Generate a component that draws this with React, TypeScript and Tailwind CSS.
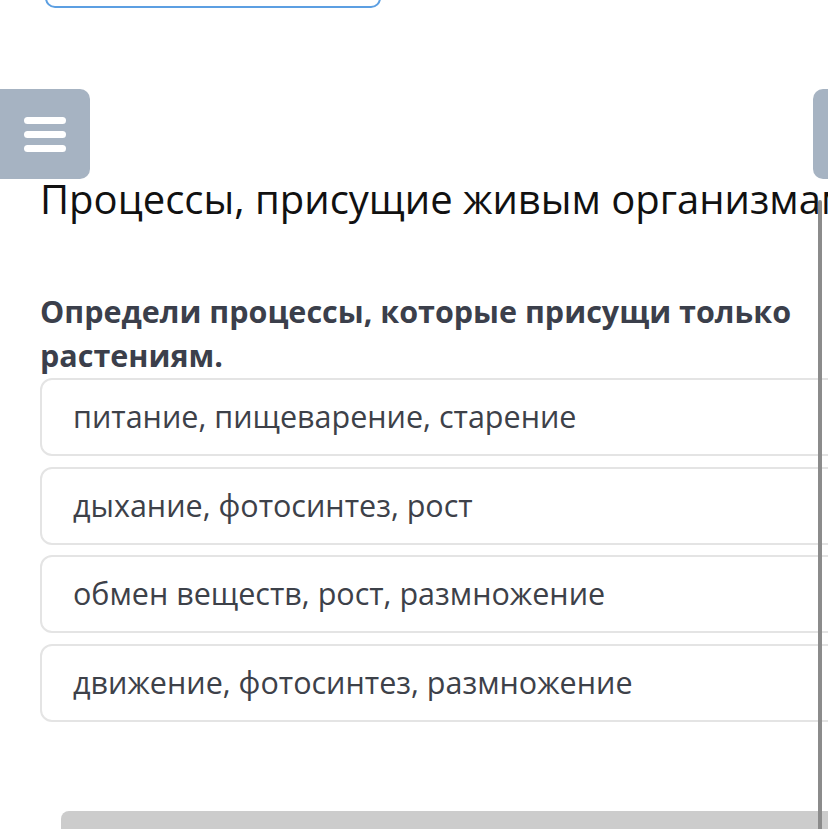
const options = [
  "питание, пищеварение, старение",
  "дыхание, фотосинтез, рост",
  "обмен веществ, рост, размножение",
  "движение, фотосинтез, размножение",
];

function MenuIcon() {
  return (
    <div className="flex flex-col gap-[7px]">
      <span className="block h-[7px] w-[42px] rounded-full bg-white" />
      <span className="block h-[7px] w-[42px] rounded-full bg-white" />
      <span className="block h-[7px] w-[42px] rounded-full bg-white" />
    </div>
  );
}

export default function App() {
  return (
    <div
      className="relative w-[828px] h-[829px] overflow-hidden bg-white"
      style={{ fontFamily: '"Open Sans", "Noto Sans", sans-serif' }}
    >
      {/* tail of the previous panel */}
      <div className="ml-[45px] mt-[-42px] h-[50px] w-[336px] rounded-[10px] border-2 border-[#5c9fe2]" />

      <div className="mt-[81px] flex items-start justify-between">
        <button className="flex h-[90px] w-[90px] items-center justify-center rounded-r-[10px] bg-[#a6b3c2]">
          <MenuIcon />
        </button>
        <div className="h-[90px] w-[15px] rounded-l-[10px] bg-[#a6b3c2]" />
      </div>

      <div className="pl-[40px]">
        <h1 className="whitespace-nowrap text-[40px] leading-[40px] font-normal text-[#111111]">
          Процессы, присущие живым организмам
        </h1>

        <p className="mt-[70px] w-[780px] text-[30.5px] leading-[44px] font-bold text-[#3b3f4b]">
          Определи процессы, которые присущи только растениям.
        </p>

        <div className="mt-[1px] flex flex-col gap-[10.5px]">
          {options.map((o) => (
            <div
              key={o}
              className="flex h-[78px] w-[830px] items-center rounded-[12px] border-2 border-[#e4e4e4] pl-[31px] text-[30.5px] text-[#3d4149]"
            >
              {o}
            </div>
          ))}
        </div>
      </div>

      <div className="ml-[61px] mt-[89px] h-[40px] rounded-tl-[8px] bg-[#cccccc]" />

      {/* scrollbar */}
      <div className="absolute left-[818px] top-[200px] h-[640px] w-[4px] rounded-t-full bg-[#8b8b8b]" />
    </div>
  );
}
